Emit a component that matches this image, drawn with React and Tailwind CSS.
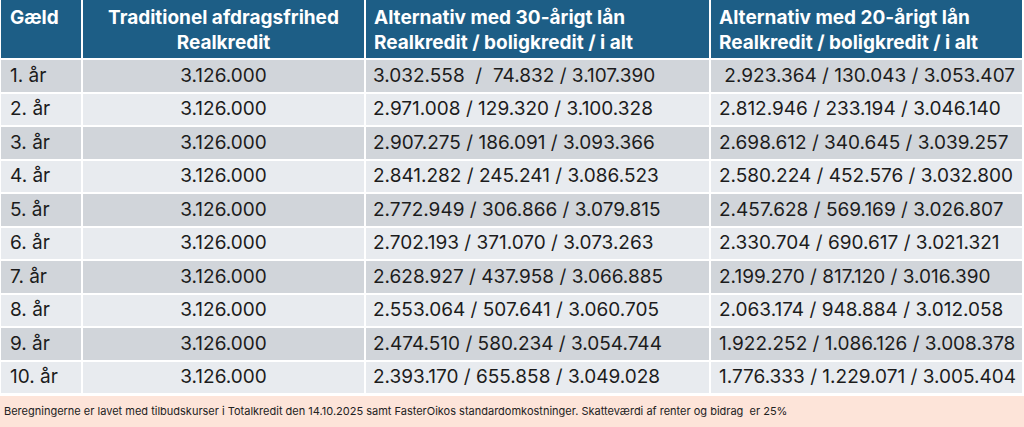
const rows = [
  ["1. år", "3.126.000", "3.032.558  /  74.832 / 3.107.390", " 2.923.364 / 130.043 / 3.053.407"],
  ["2. år", "3.126.000", "2.971.008 / 129.320 / 3.100.328", "2.812.946 / 233.194 / 3.046.140"],
  ["3. år", "3.126.000", "2.907.275 / 186.091 / 3.093.366", "2.698.612 / 340.645 / 3.039.257"],
  ["4. år", "3.126.000", "2.841.282 / 245.241 / 3.086.523", "2.580.224 / 452.576 / 3.032.800"],
  ["5. år", "3.126.000", "2.772.949 / 306.866 / 3.079.815", "2.457.628 / 569.169 / 3.026.807"],
  ["6. år", "3.126.000", "2.702.193 / 371.070 / 3.073.263", "2.330.704 / 690.617 / 3.021.321"],
  ["7. år", "3.126.000", "2.628.927 / 437.958 / 3.066.885", "2.199.270 / 817.120 / 3.016.390"],
  ["8. år", "3.126.000", "2.553.064 / 507.641 / 3.060.705", "2.063.174 / 948.884 / 3.012.058"],
  ["9. år", "3.126.000", "2.474.510 / 580.234 / 3.054.744", "1.922.252 / 1.086.126 / 3.008.378"],
  ["10. år", "3.126.000", "2.393.170 / 655.858 / 3.049.028", "1.776.333 / 1.229.071 / 3.005.404"],
];

export default function App() {
  return (
    <div className="w-[1024px] h-[427px] bg-white overflow-hidden text-[#1c1c1c]" style={{ fontFamily: "Inter, 'Liberation Sans', sans-serif" }}>
      <div className="pl-[1px] w-[1022px] grid grid-cols-[80px_281px_343px_311px] grid-rows-[58px_repeat(10,31.5px)] gap-[2px]">
        <div className="bg-[#1d5e86] text-white font-bold text-[19px] leading-[25px] pl-[9px] pt-[5px]">Gæld</div>
        <div className="bg-[#1d5e86] text-white font-bold text-[19px] leading-[25px] text-center pt-[5px]">
          Traditionel afdragsfrihed<br />Realkredit
        </div>
        <div className="bg-[#1d5e86] text-white font-bold text-[19px] leading-[25px] pl-[8px] pt-[5px]">
          Alternativ med 30-årigt lån<br />Realkredit / boligkredit / i alt
        </div>
        <div className="bg-[#1d5e86] text-white font-bold text-[19px] leading-[25px] pl-[8px] pt-[5px]">
          Alternativ med 20-årigt lån<br />Realkredit / boligkredit / i alt
        </div>
        {rows.map((r, i) => {
          const bg = i % 2 === 0 ? "bg-[#d1d5da]" : "bg-[#e8ebef]";
          return [
            <div key={i + "a"} className={`${bg} flex items-center pl-[9px] text-[19px]`}>{r[0]}</div>,
            <div key={i + "b"} className={`${bg} flex items-center justify-center text-[19px]`}>{r[1]}</div>,
            <div key={i + "c"} className={`${bg} flex items-center pl-[7px] text-[19px] whitespace-pre`}>{r[2]}</div>,
            <div key={i + "d"} className={`${bg} flex items-center pl-[8px] text-[19px] whitespace-pre`}>{r[3]}</div>,
          ];
        })}
      </div>
      <div className="mt-[3px] h-[31px] bg-[#fde4d9] flex items-center pl-[4px] text-[11px] text-[#222]">
        Beregningerne er lavet med tilbudskurser i Totalkredit den 14.10.2025 samt FasterOikos standardomkostninger. Skatteværdi af renter og bidrag&nbsp; er 25%
      </div>
    </div>
  );
}
